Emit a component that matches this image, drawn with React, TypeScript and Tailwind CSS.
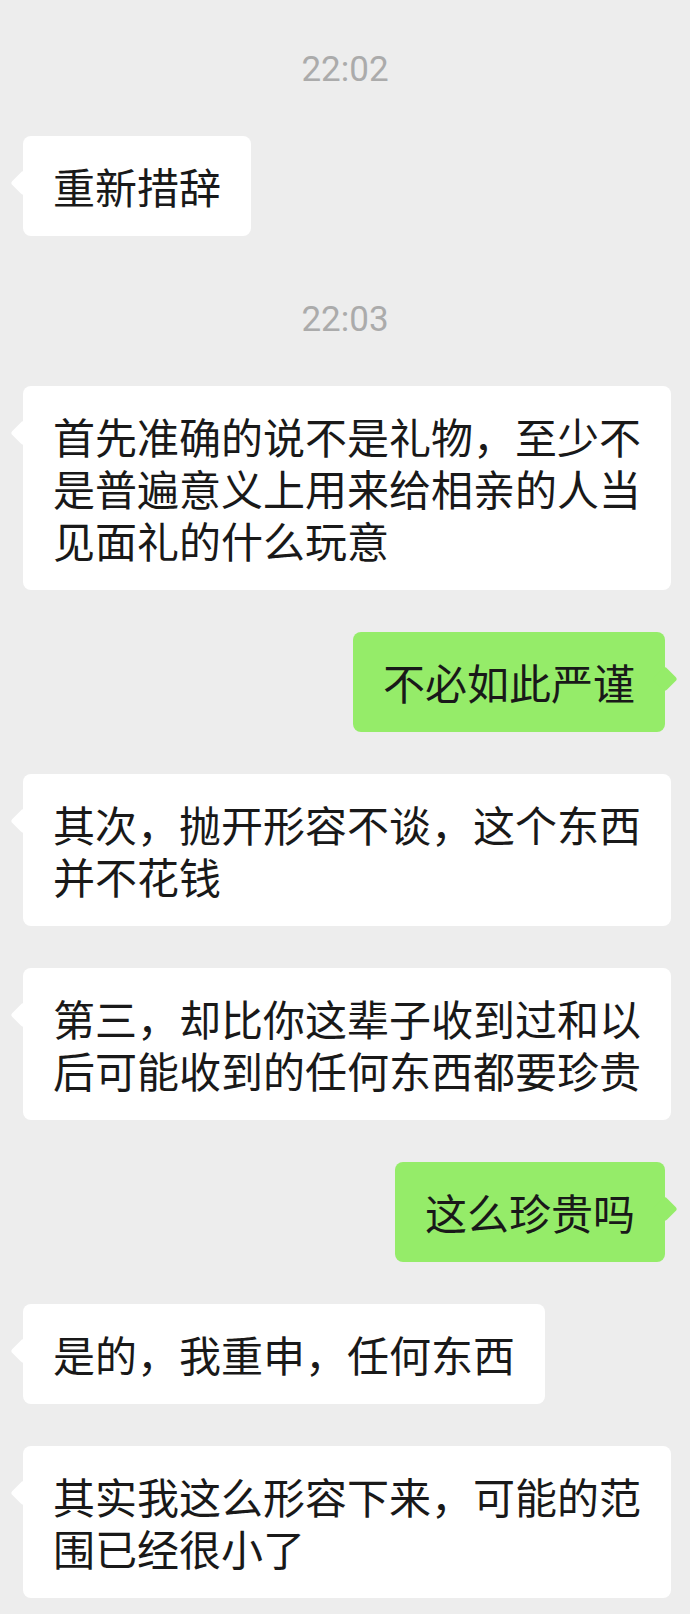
import React from "react";

type Msg =
    | { kind: "time"; text: string }
    | { kind: "in" | "out"; lines: string[] };

const messages: Msg[] = [
    { kind: "time", text: "22:02" },
    { kind: "in", lines: ["重新措辞"] },
    { kind: "time", text: "22:03" },
    { kind: "in", lines: ["首先准确的说不是礼物，至少不", "是普遍意义上用来给相亲的人当", "见面礼的什么玩意"] },
    { kind: "out", lines: ["不必如此严谨"] },
    { kind: "in", lines: ["其次，抛开形容不谈，这个东西", "并不花钱"] },
    { kind: "in", lines: ["第三，却比你这辈子收到过和以", "后可能收到的任何东西都要珍贵"] },
    { kind: "out", lines: ["这么珍贵吗"] },
    { kind: "in", lines: ["是的，我重申，任何东西"] },
    { kind: "in", lines: ["其实我这么形容下来，可能的范", "围已经很小了"] },
];

const TimeLabel = ({ text }: { text: string }) => (
    <div className="h-[40px] text-center text-[35px] leading-[40px] text-[#ababab] font-['Roboto',sans-serif] mb-[46px]">
        {text}
    </div>
);

const Bubble = ({ lines, mine }: { lines: string[]; mine?: boolean }) => {
    const side = mine
        ? "self-end mr-[25px] bg-[#95ec69]"
        : "self-start ml-[23px] bg-white";

    return (
        <div className={`relative max-w-[653px] rounded-[8px] px-[30px] py-[24px] ${side}`}>
            {/* little tail pointing at the speaker */}
            <span
                className={`absolute top-[38px] w-[18px] h-[18px] rotate-45 rounded-[3px] ${
                    mine ? "right-[-9px] bg-[#95ec69]" : "left-[-9px] bg-white"
                }`}
            />
            <p className="relative text-[42px] leading-[52px] text-[#191919] whitespace-nowrap">
                {lines.map((l, i) => (
                    <React.Fragment key={i}>
                        {i > 0 && <br />}
                        {l}
                    </React.Fragment>
                ))}
            </p>
        </div>
    );
};

export default function App() {
    return (
        <div className="min-h-[1614px] bg-[#ededed] pt-[50px] flex flex-col font-['Noto_Sans_CJK_SC',sans-serif]">
            {messages.map((m, i) => {
                if (m.kind === "time") return <TimeLabel key={i} text={m.text} />;
                const next = messages[i + 1];
                const mb = !next ? "" : next.kind === "time" ? "mb-[64px]" : "mb-[42px]";
                return (
                    <div key={i} className={`flex flex-col ${mb}`}>
                        <Bubble lines={m.lines} mine={m.kind === "out"} />
                    </div>
                );
            })}
        </div>
    );
}
